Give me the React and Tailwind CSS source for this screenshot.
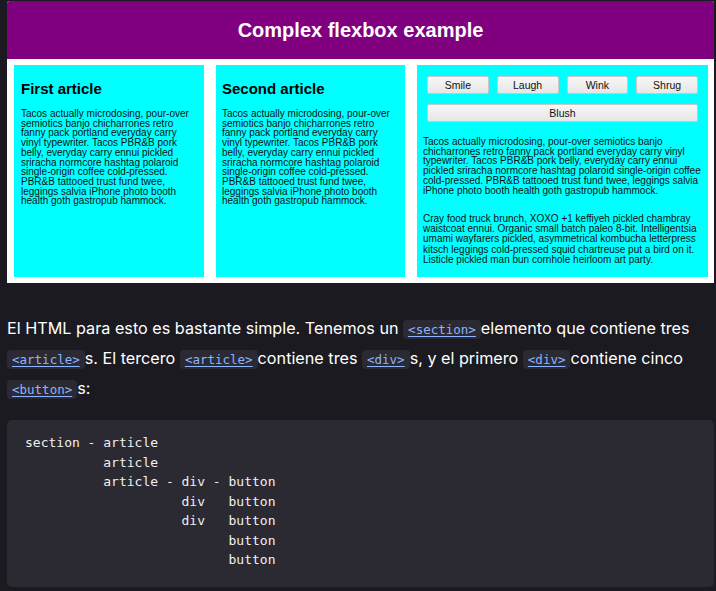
import React from "react";

const tacos =
  "Tacos actually microdosing, pour-over semiotics banjo chicharrones retro fanny pack portland everyday carry vinyl typewriter. Tacos PBR&B pork belly, everyday carry ennui pickled sriracha normcore hashtag polaroid single-origin coffee cold-pressed. PBR&B tattooed trust fund twee, leggings salvia iPhone photo booth health goth gastropub hammock.";

const cray =
  "Cray food truck brunch, XOXO +1 keffiyeh pickled chambray waistcoat ennui. Organic small batch paleo 8-bit. Intelligentsia umami wayfarers pickled, asymmetrical kombucha letterpress kitsch leggings cold-pressed squid chartreuse put a bird on it. Listicle pickled man bun cornhole heirloom art party.";

const code = `section - article
          article
          article - div - button
                    div   button
                    div   button
                          button
                          button`;

function Tag({ children }) {
  return (
    <code className="rounded-[4px] bg-[#2b2a33] px-[5px] py-[2px] font-['DejaVu_Sans_Mono',monospace] text-[12.5px] text-[#8cb4ff] underline underline-offset-2">
      {children}
    </code>
  );
}

function Btn({ children, className = "" }) {
  return (
    <button
      className={`h-[18px] rounded-[2px] border border-[#c9c9c9] bg-gradient-to-b from-[#f7f7f7] to-[#e6e6e6] text-[10.5px] leading-none text-[#111] ${className}`}
    >
      {children}
    </button>
  );
}

export default function App() {
  return (
    <div className="min-h-[591px] bg-[#1b1a20] pl-[7px] pr-[2px] pt-px font-['Liberation_Sans',Arial,sans-serif]">
      {/* example picture */}
      <div className="overflow-hidden rounded-t-[3px] bg-white">
        <header className="flex h-[58px] items-center justify-center bg-[#800080]">
          <h1 className="text-[20px] font-bold text-white">Complex flexbox example</h1>
        </header>
        <section className="flex gap-3 pb-[6px] pl-[7px] pr-[6px] pt-[6px]">
          <article className="h-[212px] w-[190px] shrink-0 bg-[#00ffff] pl-[7px] pr-[6px] pt-[15px] text-[#111]">
            <h2 className="text-[15px] font-bold leading-[17px] text-black">First article</h2>
            <p className="mt-[12px] text-[10px] leading-[9.7px]">{tacos}</p>
          </article>
          <article className="h-[212px] w-[189px] shrink-0 bg-[#00ffff] pl-[6px] pr-[6px] pt-[15px] text-[#111]">
            <h2 className="text-[15px] font-bold leading-[17px] text-black">Second article</h2>
            <p className="mt-[12px] text-[10px] leading-[9.7px]">{tacos}</p>
          </article>
          <article className="h-[212px] flex-1 bg-[#00ffff] px-[6px] pt-[11px] text-[#111]">
            <div className="mx-[4px] grid grid-cols-4 gap-x-[8px] gap-y-[10px]">
              <Btn>Smile</Btn>
              <Btn>Laugh</Btn>
              <Btn>Wink</Btn>
              <Btn>Shrug</Btn>
              <Btn className="col-span-4">Blush</Btn>
            </div>
            <p className="mt-[15px] text-[10px] leading-[9.7px]">{tacos}</p>
            <p className="mt-[19px] text-[10px] leading-[10.1px]">{cray}</p>
          </article>
        </section>
      </div>

      {/* description */}
      <p className="mt-[31px] font-['Inter',sans-serif] text-[16.2px] leading-[29px] text-white">
        El HTML para esto es bastante simple. Tenemos un <Tag>&lt;section&gt;</Tag>elemento que contiene tres{" "}
        <Tag>&lt;article&gt;</Tag>s. El tercero <Tag>&lt;article&gt;</Tag>contiene tres <Tag>&lt;div&gt;</Tag>s, y el
        primero <Tag>&lt;div&gt;</Tag>contiene cinco <Tag>&lt;button&gt;</Tag>s:
      </p>

      <pre className="mt-[16px] rounded-[5px] bg-[#2b2a33] pb-[17px] pl-[18px] pt-[13px] font-['DejaVu_Sans_Mono',monospace] text-[13px] leading-[19.5px] text-[#f0f0f0]">
        {code}
      </pre>
    </div>
  );
}
